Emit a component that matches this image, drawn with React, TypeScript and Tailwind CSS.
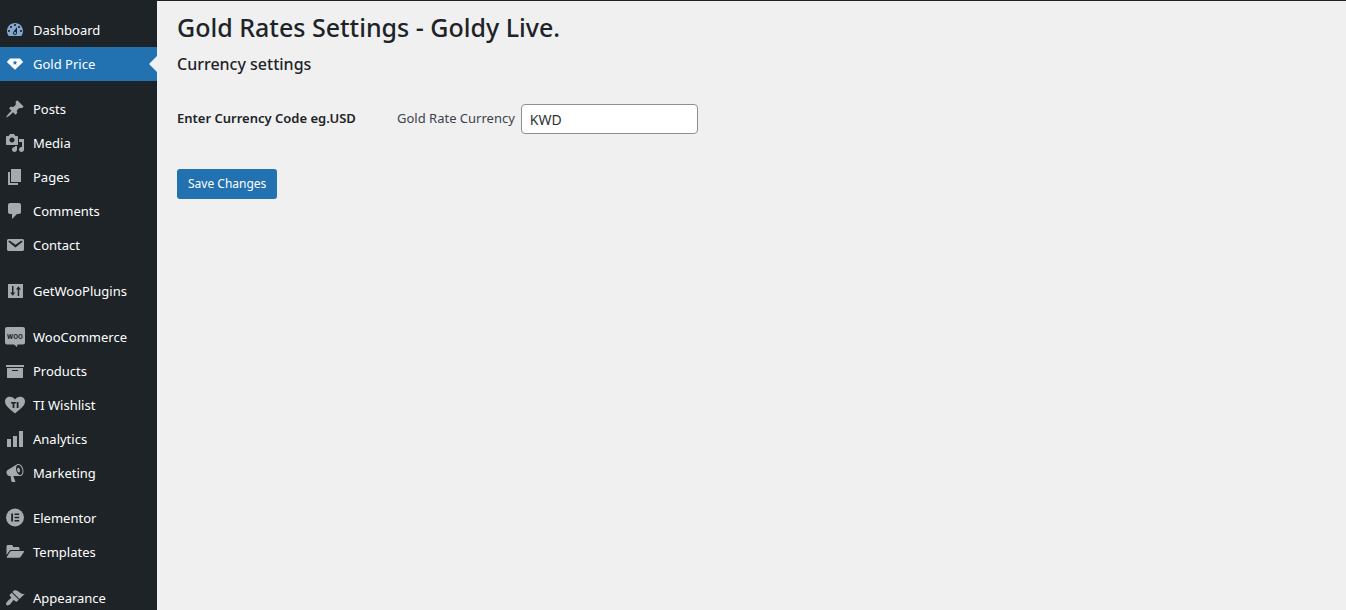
import type { ReactNode } from "react";

type MenuItem = {
  label: string;
  icon: ReactNode;
  current?: boolean;
  iconColor?: string;
};

type MenuGroup = {
  spacing: string;
  items: MenuItem[];
};

const menu: MenuGroup[] = [
  {
    spacing: "mt-3",
    items: [
      {
        label: "Dashboard",
        iconColor: "text-[#84a7d3]",
        icon: (
          <path d="M3.76 16h12.48c1.1-1.37 1.76-3.11 1.76-5 0-4.42-3.58-8-8-8s-8 3.58-8 8c0 1.89.66 3.63 1.76 5zM10 4c.55 0 1 .45 1 1s-.45 1-1 1-1-.45-1-1 .45-1 1-1zM6 6c.55 0 1 .45 1 1s-.45 1-1 1-1-.45-1-1 .45-1 1-1zm8 0c.55 0 1 .45 1 1s-.45 1-1 1-1-.45-1-1 .45-1 1-1zm-5.37 5.55L12 7v6c0 1.1-.9 2-2 2s-2-.9-2-2c0-.57.24-1.08.63-1.45zM4 10c.55 0 1 .45 1 1s-.45 1-1 1-1-.45-1-1 .45-1 1-1zm12 0c.55 0 1 .45 1 1s-.45 1-1 1-1-.45-1-1 .45-1 1-1zm-5 3c0-.55-.45-1-1-1s-1 .45-1 1 .45 1 1 1 1-.45 1-1z" />
        ),
      },
      {
        label: "Gold Price",
        current: true,
        icon: (
          <>
            <path d="M5 4.5h10L18.2 8 10 15.8 1.8 8z" />
            <path
              fill="#2271b1"
              d="M10 6.4l.7 1.4 1.6.2-1.2 1.1.3 1.6-1.4-.8-1.4.8.3-1.6L7.700 8l1.6-.2z"
            />
          </>
        ),
      },
    ],
  },
  {
    spacing: "mt-[11px]",
    items: [
      {
        label: "Posts",
        icon: (
          <path d="M10.44 3.02l1.82-1.82 6.36 6.35-1.83 1.82c-1.05-.68-2.48-.57-3.41.36l-.75.75c-.92.93-1.04 2.35-.35 3.41l-1.83 1.82-2.41-2.41-2.8 2.79c-.42.42-3.38 2.71-3.8 2.29s1.86-3.39 2.28-3.81l2.79-2.79L4.1 9.36l1.83-1.82c1.05.69 2.48.57 3.4-.36l.75-.75c.93-.92 1.05-2.35.36-3.41z" />
        ),
      },
      {
        label: "Media",
        icon: (
          <path d="M13 11V4c0-.55-.45-1-1-1h-1.67L9 1H5L3.67 3H2c-.55 0-1 .45-1 1v7c0 .55.45 1 1 1h10c.55 0 1-.45 1-1zM7 4.5c1.38 0 2.5 1.12 2.5 2.5S8.38 9.5 7 9.5 4.5 8.38 4.5 7 5.62 4.5 7 4.5zM14 6h5v10.5c0 1.38-1.12 2.5-2.5 2.5S14 17.88 14 16.5s1.12-2.5 2.5-2.5c.17 0 .34.02.5.05V9h-3V6zm-4 8.05V13h2v3.5c0 1.38-1.12 2.5-2.5 2.5S7 17.88 7 16.5 8.12 14 9.5 14c.17 0 .34.02.5.05z" />
        ),
      },
      {
        label: "Pages",
        icon: <path d="M6 15V2h10v13H6zm-1 1h8v2H3V5h2v11z" />,
      },
      {
        label: "Comments",
        icon: (
          <path d="M5 2h9c1.1 0 2 .9 2 2v7c0 1.1-.9 2-2 2h-2l-5 5v-5H5c-1.1 0-2-.9-2-2V4c0-1.1.9-2 2-2z" />
        ),
      },
      {
        label: "Contact",
        icon: (
          <path d="M3.87 4h13.25C18.37 4 19 4.59 19 5.79v8.42c0 1.19-.63 1.79-1.88 1.79H3.87c-1.25 0-1.88-.6-1.88-1.79V5.79c0-1.2.63-1.79 1.88-1.79zm6.62 8.6l6.74-5.53c.24-.2.43-.66.13-1.07-.29-.41-.82-.42-1.17-.17l-5.7 3.86L4.8 5.83c-.35-.25-.88-.24-1.17.17-.3.41-.11.87.13 1.07z" />
        ),
      },
    ],
  },
  {
    spacing: "mt-3",
    items: [
      {
        label: "GetWooPlugins",
        icon: (
          <>
            <path d="M3 3h15v14H3z" />
            <path
              fill="#1d2327"
              d="M7 5h1.5v6.5h1.8l-2.5 3.3-2.6-3.3H7zM12.700 15h1.5V8.500H16l-2.600-3.300-2.500 3.300h1.800z"
            />
          </>
        ),
      },
    ],
  },
  {
    spacing: "mt-3",
    items: [
      {
        label: "WooCommerce",
        icon: (
          <>
            <path d="M2 0h16c1.1 0 2 .9 2 2v13.5c0 1.1-.9 2-2 2h-5.5l-.5 2.500-3-2.500H2c-1.1 0-2-.9-2-2V2c0-1.1.9-2 2-2z" />
            <text
              x="10"
              y="11.5"
              textAnchor="middle"
              className="fill-[#1d2327] font-['Roboto'] text-[7px] font-bold"
            >
              WOO
            </text>
          </>
        ),
      },
      {
        label: "Products",
        icon: <path d="M19 4v2H1V4h18zM2 7h16v10H2V7zm11 3V9H7v1h6z" />,
      },
      {
        label: "TI Wishlist",
        icon: (
          <>
            <path d="M10 18.5C4.5 14 0 10.8 0 6.6 0 3.8 2.1 1.8 4.8 1.8c2.2 0 4 1 5.2 2.7 1.2-1.7 3-2.7 5.2-2.7 2.7 0 4.8 2 4.8 4.8 0 4.2-4.5 7.4-10 11.9z" />
            <text
              x="10"
              y="12.5"
              textAnchor="middle"
              className="fill-[#1d2327] font-['Open_Sans'] text-[9px] font-extrabold"
            >
              TI
            </text>
          </>
        ),
      },
      {
        label: "Analytics",
        icon: <path d="M18 18V2h-4v16h4zm-6 0V7H8v11h4zm-6 0v-8H2v8h4z" />,
      },
      {
        label: "Marketing",
        icon: (
          <path d="M18.15 5.94c.46 1.62.38 3.22-.02 4.48-.42 1.28-1.26 2.18-2.3 2.48-.16.06-.26.06-.4.06-.06.02-.12.02-.18.02-.06.02-.14.02-.22.02h-6.8l2.22 5.5c.02.14-.06.26-.14.34-.08.1-.24.16-.34.16H6.95c-.1 0-.26-.06-.34-.16-.08-.08-.16-.2-.14-.34l-1-5.5H4.25l-.02-.02c-.5.06-1.08-.18-1.54-.62s-.88-1.08-1.06-1.88c-.24-.8-.2-1.56-.02-2.2.18-.62.58-1.08 1.06-1.3l.02-.02 9-5.4c.1-.06.18-.1.24-.16.06-.04.14-.08.24-.12.16-.08.28-.12.5-.18 1.04-.3 2.24.1 3.22.98s1.84 2.24 2.26 3.86zm-2.58 5.98h-.02c.4-.1.74-.34 1.04-.7.58-.7.86-1.76.86-3.04 0-.64-.1-1.3-.28-1.98-.34-1.36-1.02-2.5-1.78-3.24s-1.68-1.1-2.46-.88c-.82.22-1.4.96-1.7 2-.32 1.04-.28 2.36.06 3.72.38 1.36 1 2.5 1.8 3.24.78.74 1.62 1.1 2.48.88zm-2.54-7.08c.22-.04.42-.02.62.04.38.16.76.48 1.02 1s.42 1.2.42 1.78c0 .3-.04.56-.12.8-.18.48-.44.84-.86.94-.34.1-.8-.06-1.14-.4s-.64-.86-.78-1.5c-.18-.62-.12-1.24.02-1.72s.48-.84.82-.94z" />
        ),
      },
    ],
  },
  {
    spacing: "mt-[11px]",
    items: [
      {
        label: "Elementor",
        icon: (
          <>
            <circle cx="10" cy="9.5" r="9" />
            <path
              fill="#1d2327"
              d="M6.2 5.5H8v8H6.2zM9.5 5.5h4.7V7H9.5zM9.5 8.7h4.7v1.600H9.5zM9.5 12h4.7v1.500H9.5z"
            />
          </>
        ),
      },
      {
        label: "Templates",
        icon: (
          <>
            <path d="M1.5 13V4.500C1.5 3.700 2.200 3 3 3h3.500C7.300 3 8 3.700 8 4.500V5h5c.8 0 1.500.7 1.500 1.500v1.600H6.500c-1 0-1.900.5-2.500 1.300z" />
            <path d="M6.600 9h11.600c.8 0 1 .6.6 1.200l-3.100 4.600c-.4.6-1.100 1-1.900 1H2.500c-.8 0-1-.6-.6-1.100L4.900 10c.4-.6 1-1 1.700-1z" />
          </>
        ),
      },
    ],
  },
  {
    spacing: "mt-3",
    items: [
      {
        label: "Appearance",
        icon: (
          <path d="M14.48 11.06L7.41 3.99l1.5-1.5c.5-.56 2.3-.47 3.51.32 1.21.8 1.43 1.28 2.91 2.1 1.18.64 2.45 1.26 4.45.85zm-.71.71L6.7 4.7 4.93 6.47c-.39.39-.39 1.02 0 1.41l1.06 1.06c.39.39.39 1.03 0 1.42-.6.6-1.43 1.11-2.21 1.69-.35.26-.7.53-1.01.84C1.43 14.23.4 16.08 1.4 17.07c.99 1 2.84-.03 4.18-1.36.31-.31.58-.66.85-1.02.57-.78 1.08-1.61 1.69-2.21.39-.39 1.02-.39 1.41 0l1.06 1.06c.39.39 1.02.39 1.41 0z" />
        ),
      },
    ],
  },
];

function MenuLink({ item }: { item: MenuItem }) {
  const iconColor = item.iconColor ?? (item.current ? "text-white" : "text-[#a7aaad]");

  return (
    <li>
      <a
        href="#"
        aria-current={item.current ? "page" : undefined}
        className={`relative flex h-[34px] items-center gap-2 pl-[5px] text-white ${
          item.current ? "bg-[#2271b1]" : ""
        }`}
      >
        <svg
          viewBox="0 0 20 20"
          fill="currentColor"
          aria-hidden="true"
          className={`size-5 shrink-0 ${iconColor}`}
        >
          {item.icon}
        </svg>
        {item.label}
        {item.current && (
          <span className="absolute right-0 top-1/2 -translate-y-1/2 border-y-8 border-r-8 border-y-transparent border-r-[#f0f0f1]" />
        )}
      </a>
    </li>
  );
}

export default function App() {
  return (
    <div className="flex h-screen border-t border-[#1d2327] bg-[#f0f0f1] font-['Noto_Sans',sans-serif] text-[13px] text-[#3c434a]">
      <nav
        aria-label="Main menu"
        className="w-[157px] shrink-0 overflow-hidden bg-[#1d2327] leading-5"
      >
        {menu.map((group) => (
          <ul key={group.items[0].label} className={group.spacing}>
            {group.items.map((item) => (
              <MenuLink key={item.label} item={item} />
            ))}
          </ul>
        ))}
      </nav>

      <main className="flex-1 px-5 pt-2">
        <h1 className="text-[25px] font-medium leading-9 text-[#1d2327]">
          Gold Rates Settings - Goldy Live.
        </h1>
        <h2 className="mt-2 text-[16px] font-medium leading-[22px] text-[#1d2327]">
          Currency settings
        </h2>

        <form onSubmit={(event) => event.preventDefault()}>
          <div className="mt-[29px] flex items-center">
            <span className="w-[220px] font-semibold text-[#1d2327]">
              Enter Currency Code eg.USD
            </span>
            <div className="flex items-center gap-1.5">
              <label htmlFor="currency">Gold Rate Currency</label>
              <input
                id="currency"
                type="text"
                defaultValue="KWD"
                className="h-[30px] w-[177px] rounded border border-[#8c8f94] bg-white px-2 text-[14px] text-[#2c3338]"
              />
            </div>
          </div>

          <button
            type="submit"
            className="mt-[35px] h-[30px] rounded-[3px] bg-[#2271b1] px-[11px] text-[12px] text-white"
          >
            Save Changes
          </button>
        </form>
      </main>
    </div>
  );
}
